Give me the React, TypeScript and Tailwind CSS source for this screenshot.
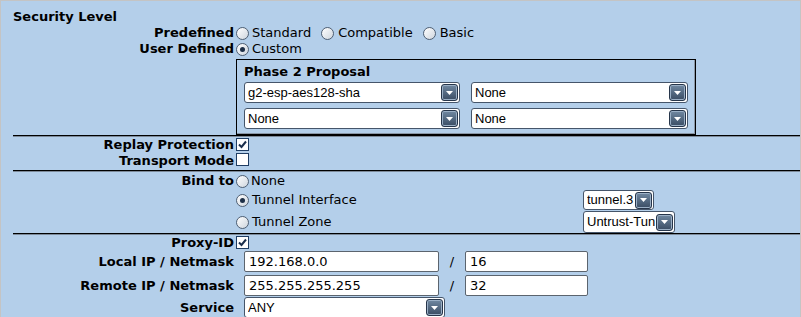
import React from 'react';

const Radio = ({ checked = false }: { checked?: boolean }) => (
  <span className="inline-flex h-[13px] w-[13px] shrink-0 items-center justify-center rounded-full border border-[#4f5f73] bg-gradient-to-br from-white to-[#cfd6de]">
    {checked && <span className="h-[5px] w-[5px] rounded-full bg-[#1d2f47]" />}
  </span>
);

const Check = ({ checked = false }: { checked?: boolean }) => (
  <span className="inline-flex h-[13px] w-[13px] shrink-0 items-center justify-center border border-[#1f3d63] bg-white">
    {checked && (
      <svg width="9" height="9" viewBox="0 0 9 9">
        <path d="M1 4.5 L3.5 7 L8 1.5" fill="none" stroke="#1b2f4d" strokeWidth="2" />
      </svg>
    )}
  </span>
);

const Select = ({ value, className }: { value: string; className: string }) => (
  <div className={`flex items-center rounded-[3px] border border-[#45556a] bg-white pl-[3px] pr-[1px] font-['Liberation_Sans',Arial,sans-serif] text-[13px] text-black ${className}`}>
    <span className="flex-1 overflow-hidden whitespace-nowrap">{value}</span>
    <span className="flex h-[17px] w-[17px] shrink-0 items-center justify-center rounded-[3px] border border-[#26354a] bg-gradient-to-b from-[#7189a2] to-[#3a4d64] shadow-[inset_0_0_0_1px_#9bb0c6]">
      <svg width="7" height="4" viewBox="0 0 7 4">
        <path d="M0 0 H7 L3.5 4 Z" fill="#fff" />
      </svg>
    </span>
  </div>
);

const Input = ({ value, className }: { value: string; className: string }) => (
  <div className={`flex h-[21px] items-center rounded-[2px] border border-[#5b646e] bg-white px-[4px] text-[13px] text-black ${className}`}>
    {value}
  </div>
);

const Label = ({ children }: { children: React.ReactNode }) => (
  <div className="w-[233px] shrink-0 text-right font-bold whitespace-nowrap">{children}</div>
);

const Line = ({ className = '' }: { className?: string }) => (
  <div className={`ml-[12px] border-t border-b border-t-black border-b-[#7d8a99] ${className}`} />
);

export default function App() {
  return (
    <div className="h-[317px] w-[801px] overflow-hidden border-l border-t border-r border-[#c4c4c4] bg-[#b4cfea] font-['DejaVu_Sans',Verdana,sans-serif] text-[13px] leading-[16px] text-black">
      <div className="mt-[8px] h-[16px] pl-[12px] font-bold">Security Level</div>

      <div className="flex h-[16px] items-center">
        <Label>Predefined</Label>
        <div className="ml-[2px] flex items-center">
          <Radio />
          <span className="ml-[3px] mr-[10px]">Standard</span>
          <Radio />
          <span className="ml-[4px] mr-[10px]">Compatible</span>
          <Radio />
          <span className="ml-[4px]">Basic</span>
        </div>
      </div>
      <div className="flex h-[16px] items-center">
        <Label>User Defined</Label>
        <div className="ml-[2px] flex items-center">
          <Radio checked />
          <span className="ml-[3px]">Custom</span>
        </div>
      </div>

      <div className="ml-[235px] mt-[2px] h-[76px] w-[460px] border border-black px-[7px] pt-[4px] shadow-[inset_-1px_-1px_0_#8a97a6]">
        <div className="h-[16px] font-bold">Phase 2 Proposal</div>
        <div className="mt-[2px] flex gap-[11px]">
          <Select value="g2-esp-aes128-sha" className="h-[21px] w-[218px]" />
          <Select value="None" className="h-[21px] w-[219px]" />
        </div>
        <div className="mt-[5px] flex gap-[11px]">
          <Select value="None" className="h-[21px] w-[218px]" />
          <Select value="None" className="h-[21px] w-[219px]" />
        </div>
      </div>

      <Line />

      <div className="flex h-[16px] items-center">
        <Label>Replay Protection</Label>
        <div className="ml-[2px]"><Check checked /></div>
      </div>
      <div className="flex h-[16px] items-center">
        <Label>Transport Mode</Label>
        <div className="ml-[2px]"><Check /></div>
      </div>

      <Line className="mt-[1px]" />

      <div className="mt-[1px] flex h-[16px] items-center">
        <Label>Bind to</Label>
        <div className="ml-[2px] flex items-center">
          <Radio />
          <span className="ml-[2px]">None</span>
        </div>
      </div>
      <div className="mt-[1px] flex h-[20px] items-center">
        <div className="w-[235px] shrink-0" />
        <div className="flex w-[347px] items-center">
          <Radio checked />
          <span className="ml-[3px]">Tunnel Interface</span>
        </div>
        <Select value="tunnel.3" className="h-[20px] w-[71px]" />
      </div>
      <div className="mt-[1px] flex h-[22px] items-center">
        <div className="w-[235px] shrink-0" />
        <div className="flex w-[347px] items-center">
          <Radio />
          <span className="ml-[3px]">Tunnel Zone</span>
        </div>
        <Select value="Untrust-Tun" className="h-[22px] w-[92px]" />
      </div>

      <Line />

      <div className="flex h-[16px] items-center">
        <Label>Proxy-ID</Label>
        <div className="ml-[2px]"><Check checked /></div>
      </div>
      <div className="flex h-[21px] items-center">
        <Label>Local IP / Netmask</Label>
        <Input value="192.168.0.0" className="ml-[10px] w-[195px]" />
        <span className="w-[26px] text-center">/</span>
        <Input value="16" className="w-[123px]" />
      </div>
      <div className="mt-[3px] flex h-[21px] items-center">
        <Label>Remote IP / Netmask</Label>
        <Input value="255.255.255.255" className="ml-[10px] w-[195px]" />
        <span className="w-[26px] text-center">/</span>
        <Input value="32" className="w-[123px]" />
      </div>
      <div className="mt-[1px] flex h-[21px] items-center">
        <Label>Service</Label>
        <Select value="ANY" className="ml-[10px] h-[21px] w-[201px] font-['DejaVu_Sans',Verdana,sans-serif]" />
      </div>
    </div>
  );
}
